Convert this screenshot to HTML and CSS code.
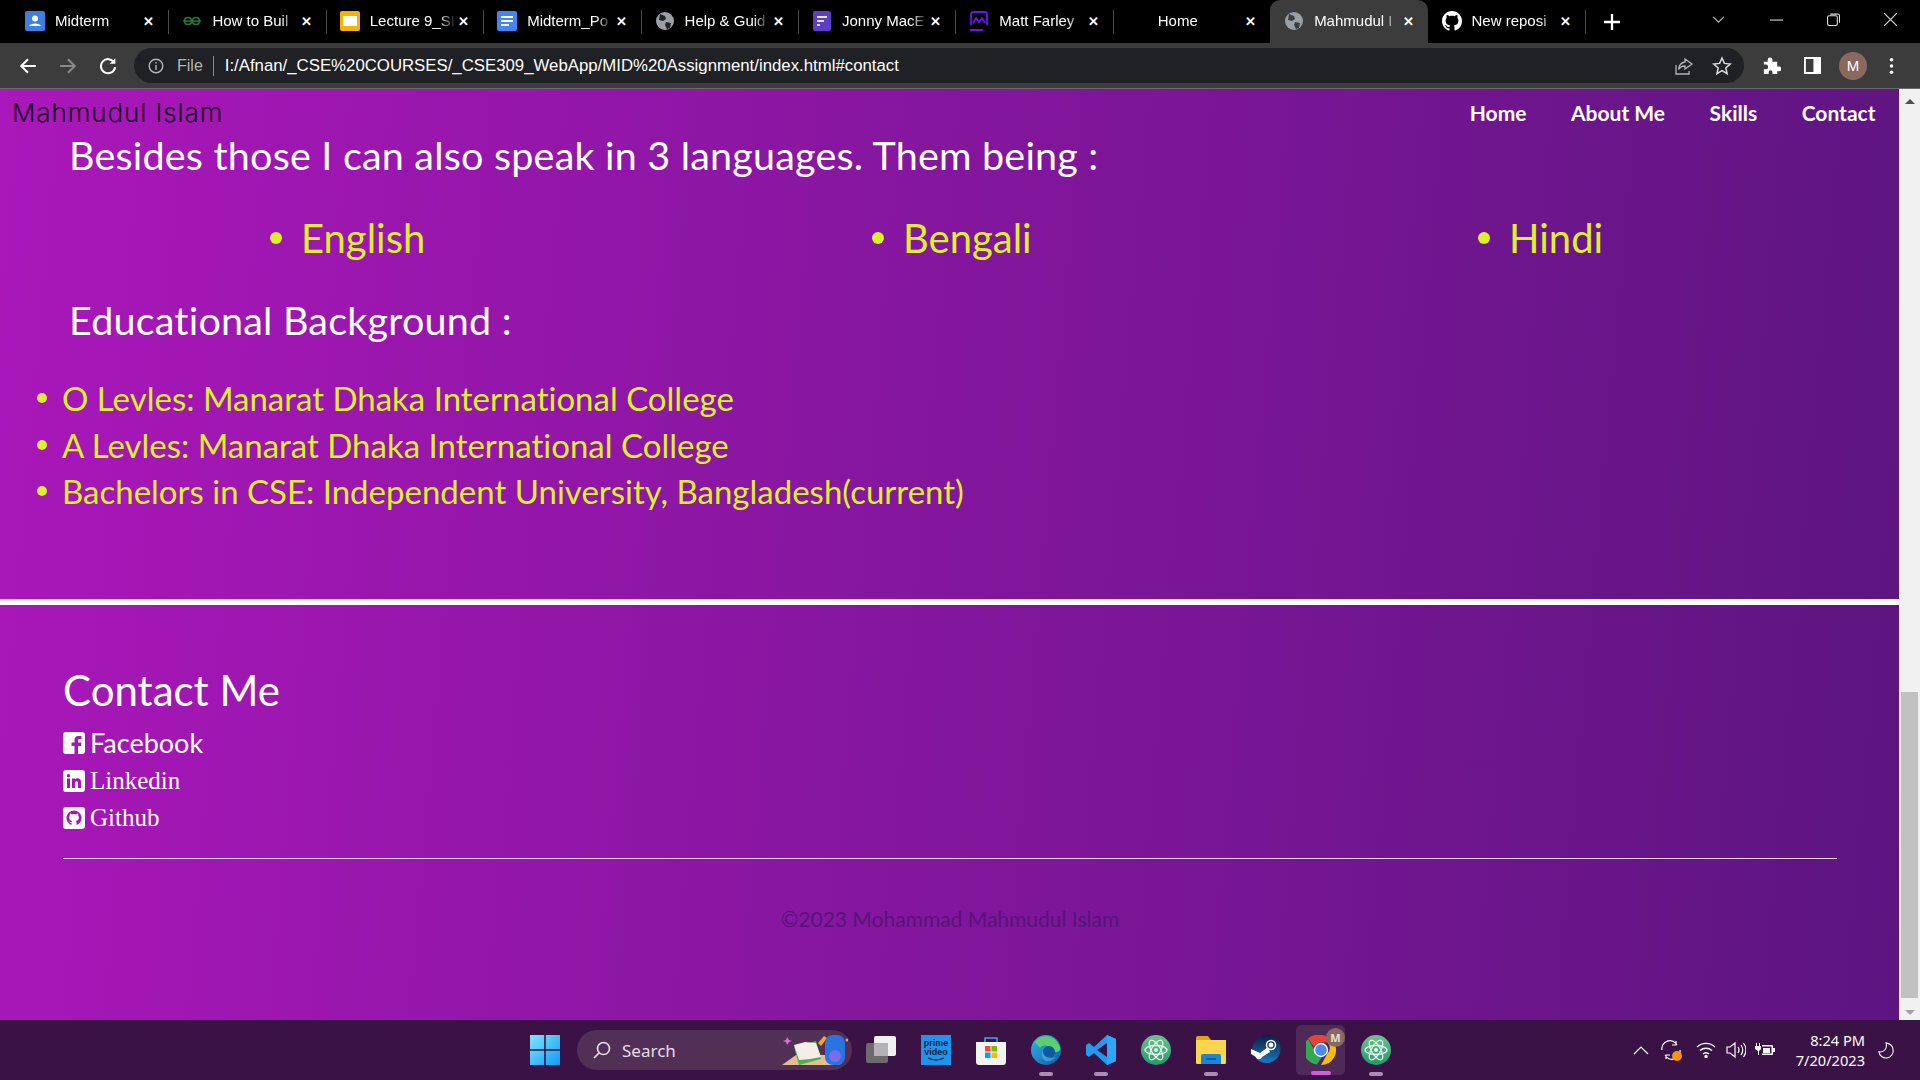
FILE: index.html
```html
<!DOCTYPE html>
<html lang="en">
<head>
<meta charset="utf-8">
<title>Mahmudul Islam</title>
<link rel="stylesheet" href="styles.css">
</head>
<body>
<header class="chrome">
  <div class="tabstrip">
    <div class="tab"><svg class="fav" viewBox="0 0 20 20"><rect width="20" height="20" rx="2" fill="#3f7fe0"/><circle cx="10" cy="7.500" r="3" fill="#fff"/><path d="M4 15c1-3.500 11-3.500 12 0z" fill="#fff"/></svg><span class="tab-title">Midterm</span><span class="tab-x">✕</span></div>
    <div class="tab"><svg class="fav" viewBox="0 0 20 20" fill="none" stroke="#2a7a3e" stroke-width="1.400"><path d="M1 10h18M10 10c-.5-2-2-3.500-4-3.500S2.500 8 2.500 10 4 13.500 6 13.500 9.500 12 10 10c.5 2 2 3.500 4 3.500s3.500-1.500 3.500-3.500S16 6.500 14 6.500 10.500 8 10 10"/></svg><span class="tab-title">How to Buil</span><span class="tab-x">✕</span></div>
    <div class="tab"><svg class="fav" viewBox="0 0 20 20"><rect width="20" height="20" rx="2" fill="#f4b400"/><rect x="3" y="5" width="14" height="10" fill="#fff"/></svg><span class="tab-title">Lecture 9_SI</span><span class="tab-x">✕</span></div>
    <div class="tab"><svg class="fav" viewBox="0 0 20 20"><rect width="20" height="20" rx="2" fill="#4285f4"/><path d="M4 5h12v2H4zM4 9h12v2H4zM4 13h8v2H4z" fill="#fff"/></svg><span class="tab-title">Midterm_Po</span><span class="tab-x">✕</span></div>
    <div class="tab"><svg class="fav" viewBox="0 0 20 20"><circle cx="10" cy="10" r="9" fill="#9aa0a6"/><path d="M5 3l5 2 1 3-3 2-4-1zM11 11l5 1-1 5-3 1-2-4z" fill="#202124"/></svg><span class="tab-title">Help &amp; Guid</span><span class="tab-x">✕</span></div>
    <div class="tab"><svg class="fav" viewBox="0 0 20 20"><rect x="1" width="18" height="20" rx="2" fill="#5b3fc4"/><path d="M5 5h10v2H5zM5 9h7v2H5zM5 13h3v2H5z" fill="#fff" opacity=".85"/></svg><span class="tab-title">Jonny MacE</span><span class="tab-x">✕</span></div>
    <div class="tab"><svg class="fav" viewBox="0 0 20 20" fill="none" stroke="#6a14f0" stroke-width="1.800"><path d="M2 14V4a3 3 0 0 1 3-3h10a3 3 0 0 1 3 3v10M1 19h13"/><path d="M4 12l3-5 3 4 3-4 3 5"/></svg><span class="tab-title">Matt Farley</span><span class="tab-x">✕</span></div>
    <div class="tab"><span class="fav fav-blank"></span><span class="tab-title">Home</span><span class="tab-x">✕</span></div>
    <div class="tab tab-active"><svg class="fav" viewBox="0 0 20 20"><circle cx="10" cy="10" r="9" fill="#9aa0a6"/><path d="M5 3l5 2 1 3-3 2-4-1zM11 11l5 1-1 5-3 1-2-4z" fill="#3c3c3c"/></svg><span class="tab-title">Mahmudul I</span><span class="tab-x">✕</span></div>
    <div class="tab tab-last"><svg class="fav" viewBox="0 0 16 16"><path fill="#fff" d="M8 0C3.580 0 0 3.580 0 8c0 3.540 2.290 6.530 5.470 7.590.4.070.55-.17.55-.38 0-.19-.01-.82-.01-1.490-2.010.37-2.530-.49-2.690-.94-.09-.23-.48-.94-.82-1.130-.28-.15-.68-.52-.01-.53.63-.01 1.080.58 1.230.82.720 1.210 1.870.87 2.330.66.070-.52.280-.87.510-1.070-1.780-.2-3.640-.89-3.640-3.950 0-.87.310-1.590.820-2.150-.08-.2-.36-1.020.08-2.120 0 0 .67-.21 2.200.82.640-.18 1.320-.27 2-.27s1.360.09 2 .27c1.530-1.040 2.200-.82 2.200-.82.440 1.100.16 1.920.08 2.120.51.560.82 1.270.82 2.150 0 3.070-1.870 3.750-3.650 3.950.290.250.540.730.540 1.480 0 1.070-.01 1.930-.01 2.200 0 .210.150.460.550.380A8.010 8.010 0 0 0 16 8c0-4.420-3.580-8-8-8z"/></svg><span class="tab-title">New reposi</span><span class="tab-x">✕</span></div>
    <svg class="newtab" viewBox="0 0 14 14"><path d="M7 0v14M0 7h14" stroke="#fff" stroke-width="2"/></svg>
    <div class="winctl">
      <svg class="winbtn winbtn-chev" viewBox="0 0 12 12" fill="none" stroke="#bbb"><path d="M1 3.500l5 5 5-5"/></svg>
      <svg class="winbtn" viewBox="0 0 12 12" fill="none" stroke="#ddd"><path d="M0 6.500h12"/></svg>
      <svg class="winbtn" viewBox="0 0 12 12" fill="none" stroke="#ddd"><rect x=".5" y="2.500" width="9" height="9" rx="1.500"/><path d="M3 1h6.500A1.500 1.500 0 0 1 11.500 2.500V9"/></svg>
      <svg class="winbtn" viewBox="0 0 12 12" fill="none" stroke="#ddd"><path d="M0 0l12 12M12 0L0 12"/></svg>
    </div>
  </div>
  <div class="toolbar">
    <svg class="tool tool-back" viewBox="0 0 16 16" fill="none" stroke="#fff" stroke-width="1.800"><path d="M15 8H2M8 2L2 8l6 6"/></svg>
    <svg class="tool tool-fwd" viewBox="0 0 16 16" fill="none" stroke="#8a8a8a" stroke-width="1.800"><path d="M1 8h13M8 2l6 6-6 6"/></svg>
    <svg class="tool tool-reload" viewBox="0 0 16 16" fill="none" stroke="#fff" stroke-width="1.800"><path d="M13.500 5A6.300 6.300 0 1 0 14.300 9"/><path d="M14.500 1v5h-5" stroke="none" fill="#fff"/></svg>
    <div class="omnibox">
      <svg class="omni-info" viewBox="0 0 16 16" fill="none" stroke="#b5b5b5" stroke-width="1.400"><circle cx="8" cy="8" r="6.800"/><path d="M8 7v5M8 4v1.600"/></svg>
      <span class="omni-file">File</span>
      <span class="omni-sep"></span>
      <span class="omni-url">I:/Afnan/_CSE%20COURSES/_CSE309_WebApp/MID%20Assignment/index.html#contact</span>
      <svg class="omni-act" viewBox="0 0 20 20" fill="none" stroke="#b5b5b5" stroke-width="1.300"><path d="M11 3l7 5-7 5v-3c-3 0-5 1-6.500 3.500C5 9 7.500 6.500 11 6zM2 9v9h13v-3"/></svg>
      <svg class="omni-act omni-star" viewBox="0 0 20 20" fill="none" stroke="#dcdcdc" stroke-width="1.500"><path d="M10 2l2.400 5.400 5.800.6-4.400 3.900 1.300 5.700-5.100-3-5.100 3 1.300-5.700L1.800 8l5.800-.6z"/></svg>
    </div>
    <svg class="tool tool-ext" viewBox="0 0 20 20"><path fill="#fff" d="M2 6h4V4a2.500 2.500 0 0 1 5 0v2h5v5h2a2.500 2.500 0 0 1 0 5h-2v3H11v-2a2 2 0 0 0-4 0v2H2v-5h2a2.500 2.500 0 0 0 0-5H2z"/></svg>
    <svg class="tool tool-side" viewBox="0 0 18 18"><path fill-rule="evenodd" fill="#fff" d="M0 0h18v18H0zM2 2v14h8V2z"/></svg>
    <span class="avatar">M</span>
    <svg class="tool tool-menu" viewBox="0 0 4 18"><circle cx="2" cy="2" r="2" fill="#fff"/><circle cx="2" cy="9" r="2" fill="#fff"/><circle cx="2" cy="16" r="2" fill="#fff"/></svg>
  </div>
</header>

<div class="window">
  <div class="page">
    <nav class="nav">
      <a class="brand">Mahmudul Islam</a>
      <ul class="nav-links"><li>Home</li><li>About Me</li><li>Skills</li><li>Contact</li></ul>
    </nav>
    <section class="about">
      <h2 class="lead">Besides those I can also speak in 3 languages. Them being :</h2>
      <ul class="langs"><li>English</li><li>Bengali</li><li>Hindi</li></ul>
      <h2 class="lead">Educational Background :</h2>
      <ul class="edu">
        <li>O Levles: Manarat Dhaka International College</li>
        <li>A Levles: Manarat Dhaka International College</li>
        <li>Bachelors in CSE: Independent University, Bangladesh(current)</li>
      </ul>
    </section>
    <section class="contact">
      <h2 class="contact-title">Contact Me</h2>
      <ul class="social">
        <li class="social-row"><svg class="social-ico" viewBox="0 0 22 22"><path fill="#fff" fill-rule="evenodd" d="M3 0h16a3 3 0 0 1 3 3v16a3 3 0 0 1-3 3h-4v-8h3l.5-3.500H15V8.500C15 7.500 15.500 7 16.500 7H18.500V4H15.500C13 4 11.500 5.500 11.500 8v2.500H8.500V14h3v8H3a3 3 0 0 1-3-3V3a3 3 0 0 1 3-3z"/></svg><span>Facebook</span></li>
        <li class="social-row social-serif"><svg class="social-ico" viewBox="0 0 22 22"><path fill="#fff" fill-rule="evenodd" d="M3 0h16a3 3 0 0 1 3 3v16a3 3 0 0 1-3 3H3a3 3 0 0 1-3-3V3a3 3 0 0 1 3-3zM4 8.500V18h3V8.500zM5.500 4a1.700 1.700 0 1 0 0 3.400 1.700 1.700 0 0 0 0-3.400zM9 8.500V18h3v-5c0-2.500 3-2.500 3 0v5h3v-6c0-4.500-4.500-4.500-6-2.500v-1z"/></svg><span>Linkedin</span></li>
        <li class="social-row social-serif"><svg class="social-ico" viewBox="0 0 22 22"><path fill="#fff" fill-rule="evenodd" d="M3 0h16a3 3 0 0 1 3 3v16a3 3 0 0 1-3 3H3a3 3 0 0 1-3-3V3a3 3 0 0 1 3-3zM11 3.500a7.500 7.500 0 0 0-2.500 14.600v-2.300c-1.500.3-2.300-.5-2.700-1.500 1 .3 1.500 1 2.800.6.100-.5.300-.8.500-1-2-.4-3-1.400-3-3.400 0-.8.300-1.500.7-2-.2-.6-.1-1.300.1-1.900.7 0 1.400.4 2 .8a6 6 0 0 1 4.200 0c.6-.4 1.300-.8 2-.8.200.6.300 1.300.1 1.900.4.500.7 1.200.7 2 0 2-1 3-3 3.400.4.400.6 1 .6 1.600v2.600A7.500 7.500 0 0 0 11 3.500z"/></svg><span>Github</span></li>
      </ul>
      <hr class="rule">
      <p class="copy">©2023 Mohammad Mahmudul Islam</p>
    </section>
  </div>
  <div class="scrollbar">
    <span class="sb-arrow sb-up"></span>
    <span class="sb-thumb"></span>
    <span class="sb-arrow sb-down"></span>
  </div>
</div>

<footer class="taskbar">
  <div class="task-center">
    <svg class="ti" viewBox="0 0 30 30"><defs><linearGradient id="w" x1="0" y1="0" x2="1" y2="1"><stop offset="0" stop-color="#7fe6ff"/><stop offset="1" stop-color="#0f9bf5"/></linearGradient></defs><path fill="url(#w)" d="M0 0h14.200v14.200H0zM15.800 0H30v14.200H15.800zM0 15.800h14.200V30H0zM15.800 15.800H30V30H15.800z"/></svg>
    <div class="search">
      <svg class="search-ico" viewBox="0 0 18 18" fill="none" stroke="#e8dcea" stroke-width="1.700"><circle cx="10.500" cy="7.500" r="6"/><path d="M6 12l-5 5"/></svg>
      <span class="search-text">Search</span>
      <svg class="search-art" viewBox="0 0 66 34"><path d="M0 32L14 22H62L60 30Q58 32 52 32z" fill="#e3bd8e"/><path d="M12 14l22-6 5 18-22 6z" fill="#4fae5a"/><path d="M12 12l11-3 11 1 5 14-11 2-11 1z" fill="#f3efe8"/><path d="M36 10l6-7 3 2-6 8z" fill="#f6a623"/><rect x="43" y="2" width="20" height="30" rx="8" fill="#2a72e0"/><rect x="47" y="17" width="12" height="12" rx="6" fill="#7a6cf2"/><path d="M5 4l2 3 3 1-3 1-2 3-1-3-3-1 3-1z" fill="#d86ee0"/><circle cx="65" cy="7" r="1.500" fill="#f5a623"/></svg>
    </div>
    <svg class="ti" viewBox="0 0 30 30"><rect x="0" y="8" width="22" height="20" rx="2" fill="#6d6a6d"/><rect x="8" y="1" width="22" height="20" rx="2" fill="#f0f0f0"/><rect x="8" y="8" width="14" height="13" fill="#b5b2b5"/></svg>
    <span class="prime"><span>prime</span><span>video</span><svg class="prime-smile" viewBox="0 0 20 5" fill="none" stroke="#10233a" stroke-width="1.300"><path d="M2 1q8 4 16 0"/></svg></span>
    <svg class="ti" viewBox="0 0 30 30"><path d="M9 7V3h12v4" fill="none" stroke="#3aa6e8" stroke-width="1.600"/><path d="M0 7h30v20a3 3 0 0 1-3 3H3a3 3 0 0 1-3-3z" fill="#f3f3f3"/><rect x="9" y="11" width="5.500" height="5.500" fill="#f25022"/><rect x="15.500" y="11" width="5.500" height="5.500" fill="#7fba00"/><rect x="9" y="17.500" width="5.500" height="5.500" fill="#00a4ef"/><rect x="15.500" y="17.500" width="5.500" height="5.500" fill="#ffb900"/></svg>
    <span class="ti-wrap ti-open"><svg class="ti" viewBox="0 0 30 30"><defs><linearGradient id="e" x1="0" y1="0" x2="1" y2="1"><stop offset="0" stop-color="#36b6e6"/><stop offset="1" stop-color="#0c59a4"/></linearGradient></defs><circle cx="15" cy="15" r="15" fill="url(#e)"/><path d="M4 7C9-1 24-2 29 12c1 5-4 6-7 4-1-5-10-8-13-3z" fill="#5ad06a"/><circle cx="18" cy="17" r="6" fill="#0c59a4"/><path d="M12 16c0 6 7 8 13 6-3 3-7 5-10 4-5-2-5-7-3-10z" fill="#7fd0f0" opacity=".4"/></svg></span>
    <span class="ti-wrap ti-open"><svg class="ti" viewBox="0 0 30 30"><path d="M21 0l9 4v22l-9 4-13-12-5 4-3-2V10l3-2 5 4z" fill="#1f9cf0"/><path d="M21 8L11 15l10 7z" fill="#3c1246"/><path d="M21 0l9 4v22l-9 4z" fill="#2aa8f5"/></svg></span>
    <svg class="ti" viewBox="0 0 30 30"><defs><linearGradient id="a" x1="0" y1="0" x2="0" y2="1"><stop offset="0" stop-color="#6dc48d"/><stop offset="1" stop-color="#1f9a6c"/></linearGradient></defs><circle cx="15" cy="15" r="15" fill="url(#a)"/><g fill="none" stroke="#eaf7ef" stroke-width="1.300"><ellipse cx="15" cy="15" rx="11" ry="4.500"/><ellipse cx="15" cy="15" rx="11" ry="4.500" transform="rotate(60 15 15)"/><ellipse cx="15" cy="15" rx="11" ry="4.500" transform="rotate(120 15 15)"/></g><circle cx="15" cy="15" r="2" fill="#eaf7ef"/></svg>
    <span class="ti-wrap ti-open"><svg class="ti" viewBox="0 0 30 30"><path d="M0 3a2 2 0 0 1 2-2h10l3 4H0z" fill="#e0a40e"/><path d="M0 5h30v23a1 1 0 0 1-1 1H1a1 1 0 0 1-1-1z" fill="#fdd64e"/><path d="M5 21a2 2 0 0 1 2-2h16a2 2 0 0 1 2 2v8H5z" fill="#1a86d8"/><path d="M10 24h10" stroke="#0d4f92" stroke-width="1.500"/></svg></span>
    <svg class="ti" viewBox="0 0 30 30"><defs><linearGradient id="s" x1="0" y1="0" x2="0" y2="1"><stop offset="0" stop-color="#0c1f43"/><stop offset="1" stop-color="#1a78ba"/></linearGradient></defs><circle cx="15.500" cy="14" r="14" fill="url(#s)"/><circle cx="20" cy="10" r="4.500" fill="none" stroke="#fff" stroke-width="1.500"/><circle cx="20" cy="10" r="2.400" fill="#fff"/><path d="M0 14l9 4 8-6 2 5-8 5c-1 3-5 3-6 0L0 19z" fill="#fff"/></svg>
    <span class="ti-wrap ti-active">
      <svg class="ti" viewBox="0 0 30 30"><path d="M15 0a15 15 0 0 1 13 7.500H15A7.500 7.500 0 0 0 8 12L2 3.500A15 15 0 0 1 15 0z" fill="#ea4335"/><path d="M2 4l6.500 11a7.500 7.500 0 0 0 7 7.500L11 29.500A15 15 0 0 1 2 4z" fill="#34a853"/><path d="M28 7.500A15 15 0 0 1 15 30l6.500-11.500a7.500 7.500 0 0 0 0-11z" fill="#fbbc05"/><circle cx="15" cy="15" r="6.500" fill="#4a8af4" stroke="#fff" stroke-width="1.400"/></svg>
      <span class="ti-badge">M</span>
    </span>
    <span class="ti-wrap ti-open"><svg class="ti" viewBox="0 0 30 30"><circle cx="15" cy="15" r="15" fill="url(#a)"/><g fill="none" stroke="#eaf7ef" stroke-width="1.300"><ellipse cx="15" cy="15" rx="11" ry="4.500"/><ellipse cx="15" cy="15" rx="11" ry="4.500" transform="rotate(60 15 15)"/><ellipse cx="15" cy="15" rx="11" ry="4.500" transform="rotate(120 15 15)"/></g><circle cx="15" cy="15" r="2" fill="#eaf7ef"/></svg></span>
  </div>
  <div class="tray">
    <svg class="tray-ico tray-chev" viewBox="0 0 16 10" fill="none" stroke="#fff" stroke-width="1.200"><path d="M1 9l7-7 7 7"/></svg>
    <span class="tray-sync">
      <svg class="tray-ico" viewBox="0 0 20 20" fill="none" stroke="#fff" stroke-width="1.200"><path d="M1 10A8 8 0 0 1 16 5M15 1v4h-4M19 10a8 8 0 0 1-15 5M5 19v-4h4"/></svg>
      <span class="tray-dot"></span>
    </span>
    <svg class="tray-ico tray-wifi" viewBox="0 0 20 16" fill="none" stroke="#fff" stroke-width="1.400"><path d="M1 5a13 13 0 0 1 18 0M4 8.500a9 9 0 0 1 12 0M7 12a4.500 4.500 0 0 1 6 0"/><circle cx="10" cy="14.500" r="1" fill="#fff"/></svg>
    <svg class="tray-ico tray-vol" viewBox="0 0 20 18" fill="none" stroke="#fff" stroke-width="1.200"><path d="M1 6h3l5-4v14l-5-4H1zM12 6q2 3 0 6M15 4q3.500 5 0 10M17.500 2q5 7 0 14"/></svg>
    <svg class="tray-ico tray-bat" viewBox="0 0 20 16"><path fill="#fff" d="M1 1h1v3h2V1h1v3h1v3L4 9v4H3V9L0 7V4h1zM7 3h10a1 1 0 0 1 1 1v2h2v4h-2v2a1 1 0 0 1-1 1H7v-1.500h9.500v-7H7z"/><rect x="8" y="6" width="7" height="5" fill="#fff"/></svg>
    <div class="clock"><span>8:24 PM</span><span>7/20/2023</span></div>
    <svg class="tray-ico tray-moon" viewBox="0 0 18 18" fill="none" stroke="#fff" stroke-width="1.200"><path d="M9 1c5 1 8 4 8 8a8 8 0 0 1-16 2c5 1 10-3 8-10z"/></svg>
  </div>
</footer>
</body>
</html>
```

FILE: styles.css
```css
* { box-sizing: border-box; }
html, body { margin: 0; height: 100%; overflow: hidden; }
body { width: 1920px; height: 1080px; display: flex; flex-direction: column; font-family: "Noto Sans", sans-serif; background: #000; }
ul { margin: 0; padding: 0; list-style: none; }

.chrome { flex: none; height: 89px; display: flex; flex-direction: column; }
.tabstrip { flex: none; height: 43px; background: #000; display: flex; padding-left: 11px; position: relative; }
.tab { width: 157.4px; height: 43px; display: flex; align-items: center; padding: 0 11.500px 2px 14px; color: #fff; font-size: 14px; position: relative; }
.tab::after { content: ""; position: absolute; right: -1px; top: 10px; height: 24px; width: 1px; background: #4a4a4a; }
.tab-active { background: #3c3c3c; border-radius: 10px 10px 0 0; }
.tab-active::after, .tab:nth-child(8)::after { display: none; }
.fav { width: 20px; height: 20px; flex: none; margin-right: 10px; }
.fav-blank { visibility: hidden; margin-right: 11px; }
.tab-title { flex: 1; overflow: hidden; white-space: nowrap; font-family: "Liberation Sans", sans-serif; font-size: 15px; -webkit-mask-image: linear-gradient(90deg, #000 80%, transparent 100%); mask-image: linear-gradient(90deg, #000 80%, transparent 100%); }
.tab-x { flex: none; width: 16px; text-align: center; font-size: 13px; font-weight: 700; }
.newtab { width: 16px; height: 16px; margin-left: 19px; align-self: center; }
.winctl { position: absolute; right: 1px; top: 0; height: 38px; display: flex; align-items: center; }
.winbtn { width: 13px; height: 13px; margin-right: 44px; }
.winctl .winbtn:last-child { margin-right: 22px; }
.winbtn-chev { margin-right: 45px; }

.toolbar { flex: none; height: 46px; background: #3c3c3c; border-bottom: 1px solid #6a6a6a; display: flex; align-items: center; padding: 0 20px 0 19px; }
.tool { flex: none; }
.tool-back, .tool-fwd, .tool-reload { width: 18px; height: 18px; margin-right: 22px; }
.tool-reload { margin-right: 17px; }
.omnibox { flex: none; width: 1610px; height: 35px; background: #202124; border-radius: 18px; display: flex; align-items: center; padding: 0 12px 0 14px; margin-right: 18px; }
.omni-info { width: 16px; height: 16px; margin-right: 13px; }
.omni-file { color: #b5b5b5; font-size: 16px; font-family: "Liberation Sans", sans-serif; }
.omni-sep { width: 1px; height: 20px; background: #8a8a8a; margin: 0 11px 0 10px; }
.omni-url { color: #fff; font-size: 16.800px; font-family: "Liberation Sans", sans-serif; flex: 1; white-space: nowrap; }
.omni-act { width: 20px; height: 20px; margin-left: 18.500px; }
.tool-ext { width: 19px; height: 19px; margin-right: 23px; }
.tool-side { width: 17px; height: 17px; margin-right: 18px; }
.avatar { flex: none; width: 28px; height: 28px; border-radius: 50%; background: #8a6a5f; color: #fff; font-size: 15px; display: flex; align-items: center; justify-content: center; margin-right: 22px; font-family: "Liberation Sans", sans-serif; }
.tool-menu { width: 5px; height: 16px; }

.window { flex: none; height: 931px; display: flex; }
.page { width: 1899px; height: 931px; background: linear-gradient(95deg, #aa17ba 0%, #5c1580 100%); overflow: hidden; font-family: Lato, sans-serif; font-variant-ligatures: none; }
.nav { height: 43px; display: flex; justify-content: space-between; align-items: center; padding: 4px 23.500px 0 12px; }
.brand { color: #14021c; font-family: "Inter", sans-serif; font-size: 26px; font-weight: 300; letter-spacing: .9px; }
.nav-links { display: flex; gap: 44.500px; color: #fff; font-size: 21px; font-weight: 700; }

.about { height: 473px; border-bottom: 6px solid #fff; }
.lead { margin: 0; padding-left: 69px; color: #fff; font-weight: 400; font-size: 39.500px; line-height: 46px; letter-spacing: .2px; }
.langs { display: grid; grid-template-columns: 602px 606px 1fr; padding: 31px 0 30px 270px; color: #dcf02e; font-size: 40px; line-height: 58px; }
.langs li, .edu li { display: flex; align-items: center; }
.langs li::before { content: ""; width: 12px; height: 12px; border-radius: 50%; background: #dcf02e; margin-right: 19px; }
.edu { padding: 32px 0 0 37px; color: #dcf02e; font-size: 33px; line-height: 46.500px; }
.edu li::before { content: ""; width: 10px; height: 10px; border-radius: 50%; background: #dcf02e; margin-right: 15px; }

.contact { padding: 61px 62px 0 63px; color: #fff; }
.contact-title { margin: 0 0 10px; font-weight: 400; font-size: 42px; line-height: 48px; }
.social { font-size: 27px; }
.social-row { display: flex; align-items: center; gap: 5px; height: 37.700px; }
.social-serif { font-family: "Liberation Serif", serif; font-size: 25px; }
.social-ico { width: 22px; height: 22px; flex: none; }
.rule { margin: 21px 0 0; border: 0; border-top: 1px solid #e9d5ee; }
.copy { margin: 47px 0 0; text-align: center; color: #54157a; font-size: 21px; line-height: 26px; }

.scrollbar { width: 21px; height: 931px; background: #f1f1f1; display: flex; flex-direction: column; align-items: center; padding: 10px 0 5px; }
.sb-thumb { width: 17px; height: 306px; background: #c1c1c1; margin-top: auto; margin-bottom: 12px; }
.sb-arrow { width: 0; height: 0; border-left: 5px solid transparent; border-right: 5px solid transparent; }
.sb-up { border-bottom: 5px solid #505050; }
.sb-down { border-top: 5px solid #a3a3a3; }

.taskbar { flex: none; height: 60px; background: #3a1245; display: flex; align-items: center; position: relative; padding-left: 530px; }
.task-center { display: flex; align-items: center; gap: 25px; }
.ti { width: 30px; height: 30px; display: block; flex: none; }
.search { width: 275px; height: 40px; margin: 0 -11px 0 -8px; border-radius: 20px; background: #523056; display: flex; align-items: center; padding-left: 16px; color: #e8dcea; font-size: 17px; position: relative; }
.search-ico { width: 18px; height: 18px; margin-right: 11px; }
.search-text { font-family: "Noto Sans", sans-serif; }
.search-art { position: absolute; right: 4px; bottom: 3px; width: 66px; height: 34px; }
.prime { flex: none; width: 30px; height: 30px; background: #1f94ee; color: #10233a; font-family: "Liberation Sans", sans-serif; font-weight: 700; font-size: 9px; line-height: 9px; display: flex; flex-direction: column; align-items: center; justify-content: center; }
.prime-smile { width: 20px; height: 5px; display: block; }
.ti-wrap { position: relative; display: block; }
.ti-open::after { content: ""; position: absolute; left: 8px; bottom: -11px; width: 14px; height: 4px; border-radius: 2px; background: #a98fb0; }
.ti-active::before { content: ""; position: absolute; left: -10px; top: -10px; width: 49px; height: 50px; border-radius: 5px; background: #4f2a58; }
.ti-active .ti { position: relative; }
.ti-active::after { content: ""; position: absolute; left: 5px; bottom: -10px; width: 20px; height: 4px; border-radius: 2px; background: #d65ae0; }
.ti-badge { position: absolute; right: -9px; top: -7px; width: 19px; height: 19px; border-radius: 50%; background: #8a6a5f; color: #e8e0dc; font-size: 11px; font-weight: 700; display: flex; align-items: center; justify-content: center; }
.tray { position: absolute; right: 0; top: 0; height: 60px; display: flex; align-items: center; padding-right: 26px; }
.tray-ico { display: block; }
.tray-chev { width: 16px; height: 10px; margin-right: 12px; }
.tray-sync { position: relative; width: 20px; height: 20px; margin-right: 15px; }
.tray-sync .tray-ico { width: 20px; height: 20px; }
.tray-dot { position: absolute; right: -1px; bottom: -1px; width: 10px; height: 10px; border-radius: 50%; background: #f5960f; }
.tray-wifi { width: 20px; height: 16px; margin-right: 10px; }
.tray-vol { width: 20px; height: 18px; margin-right: 9px; }
.tray-bat { width: 20px; height: 16px; margin-right: 18px; }
.clock { display: flex; flex-direction: column; align-items: flex-end; color: #fff; font-family: "Noto Sans", sans-serif; font-size: 14.600px; line-height: 20px; width: 72px; }
.tray-moon { width: 16px; height: 18px; margin-left: 13px; }
```
